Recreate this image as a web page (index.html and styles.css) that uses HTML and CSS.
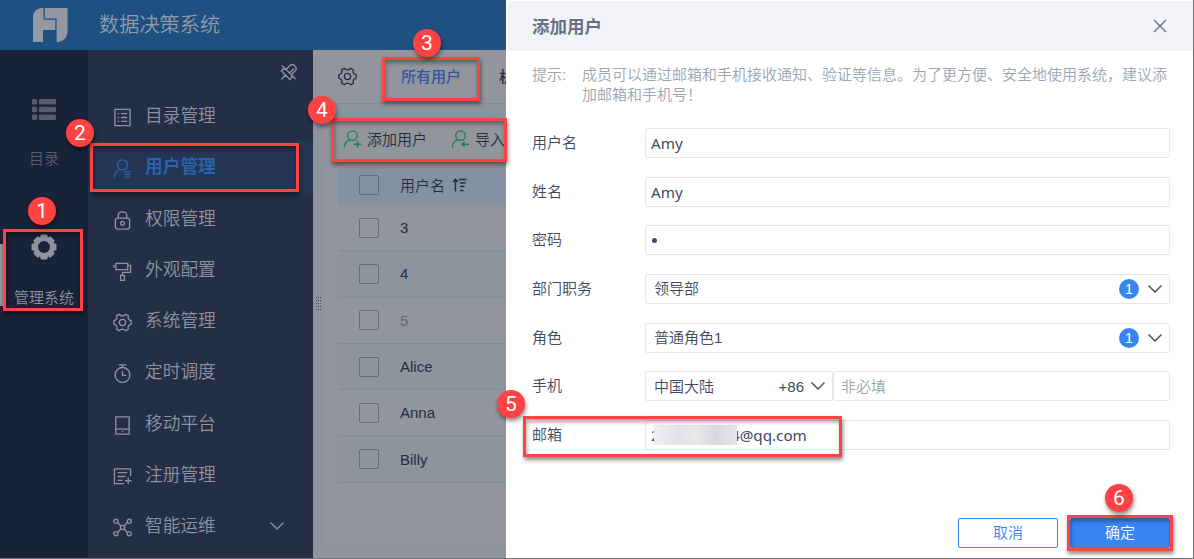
FILE: index.html
```
<!DOCTYPE html>
<html lang="zh-CN">
<head>
    <meta charset="UTF-8">
    <meta name="viewport" content="width=device-width, initial-scale=1.0">
    <title>数据决策系统</title>
    <link rel="stylesheet" href="styles.css">
</head>
<body>
    <svg class="defs" width="0" height="0">
        <symbol id="gear-line" viewBox="0 0 20 20">
            <path d="M6.600 1.300 Q10 4.800 13.400 1.300 L16.200 3 Q14.900 7.200 19 8 V12 Q14.900 12.800 16.200 17 L13.400 18.700 Q10 15.200 6.600 18.700 L3.800 17 Q5.100 12.800 1 12 V8 Q5.100 7.200 3.800 3 Z"/>
            <circle cx="10" cy="10" r="3.3"/>
        </symbol>
        <symbol id="chevron" viewBox="0 0 16 10">
            <path d="M1.5 1.5 L8 8 L14.5 1.5"/>
        </symbol>
    </svg>

    <div class="app">
        <header class="topbar">
            <svg class="logo" width="36" height="36" viewBox="0 0 36 36">
                <path d="M9 1 H11.500 V12.800 H23.300 V23 H11 V35 H1 V9 Q2 2 9 1 Z"/>
                <path d="M12.800 1 H35.500 V26 Q34 34 26 35 H24.600 V11.400 H12.800 Z"/>
            </svg>
            <span class="system-name">数据决策系统</span>
        </header>

        <div class="main">
            <nav class="rail">
                <div class="rail-item">
                    <svg width="24" height="21" viewBox="0 0 24 21">
                        <rect x="0" y="0" width="5" height="5.500" rx="1"/><rect x="7" y="0" width="17" height="5.500" rx="1"/>
                        <rect x="0" y="7.700" width="5" height="5.500" rx="1"/><rect x="7" y="7.700" width="17" height="5.500" rx="1"/>
                        <rect x="0" y="15.400" width="5" height="5.500" rx="1"/><rect x="7" y="15.400" width="17" height="5.500" rx="1"/>
                    </svg>
                    <span>目录</span>
                </div>
                <div class="rail-item current">
                    <svg width="26" height="26" viewBox="0 0 26 26">
                        <path fill-rule="evenodd" d="M10 0.500 H16 L17 3.500 L19.500 2.300 L23.700 6.500 L22.500 9 L25.500 10 V16 L22.500 17 L23.700 19.500 L19.500 23.700 L17 22.500 L16 25.500 H10 L9 22.500 L6.500 23.700 L2.300 19.500 L3.500 17 L0.500 16 V10 L3.500 9 L2.300 6.500 L6.500 2.300 L9 3.500 Z M13 7 A6 6 0 1 0 13 19 A6 6 0 1 0 13 7 Z"/>
                    </svg>
                    <span>管理系统</span>
                </div>
            </nav>

            <aside class="sidebar">
                <svg class="pin" width="18" height="18" viewBox="0 0 18 18">
                    <path d="M2 2.500 L15.500 16 M6.500 6 L10 2.500 Q12 0.500 14.500 2.500 Q17.500 5 15.500 7.500 L12 11 M10 9.500 L14 5.500 M6 6 L2.500 6.500 L1.500 8 L10 16.500 L11.500 15 L12 11.500 M5.500 12 L1.500 16.500"/>
                </svg>
                <div class="menu-item">
                    <svg class="icon" viewBox="0 0 20 20"><path d="M2 1.500 H18 V18.500 H2 Z M8.500 6 H15 M8.500 10 H15 M8.500 14 H15 M5 6 H6.500 M5 10 H6.500 M5 14 H6.500"/></svg>
                    <span>目录管理</span>
                </div>
                <div class="menu-item active">
                    <svg class="icon" viewBox="0 0 20 20"><circle cx="10" cy="6.300" r="5.300"/><path d="M1.500 19.500 Q1.500 13.500 7 11.200 M12 13.500 H18.500 M12 16.300 H18.500 M12 19 H18.500"/></svg>
                    <span>用户管理</span>
                </div>
                <div class="menu-item">
                    <svg class="icon" viewBox="0 0 20 20"><rect x="2.500" y="7.500" width="15" height="11.500" rx="2.500"/><path d="M5.500 7.500 V5 Q5.500 1 10 1 Q14.500 1 14.500 5 V7.500"/><circle cx="10" cy="13" r="2"/></svg>
                    <span>权限管理</span>
                </div>
                <div class="menu-item">
                    <svg class="icon" viewBox="0 0 20 20"><path d="M3 1.500 H15.500 V8 H3 Z M1 3 V6 M15.500 3.500 H18.500 V11 H10 V14 M8 14 H12 V19.500 H8 Z"/></svg>
                    <span>外观配置</span>
                </div>
                <div class="menu-item">
                    <svg class="icon"><use href="#gear-line"/></svg>
                    <span>系统管理</span>
                </div>
                <div class="menu-item">
                    <svg class="icon" viewBox="0 0 20 20"><circle cx="10" cy="11.500" r="7.800"/><path d="M6 1 H14 M10 1 V3.500 M10 7 V12 H14"/></svg>
                    <span>定时调度</span>
                </div>
                <div class="menu-item">
                    <svg class="icon" viewBox="0 0 20 20"><path d="M3 1 H17 V19 H3 Z M3 13.800 H17 M9.200 16.400 H10.800"/></svg>
                    <span>移动平台</span>
                </div>
                <div class="menu-item">
                    <svg class="icon" viewBox="0 0 20 20"><path d="M18.500 9.500 V2 H1.500 V17.500 H11.500 M5 6 H15 M5 10 H13 M5 14 H10 M12.500 14.500 H19.500 M16 11 V18"/></svg>
                    <span>注册管理</span>
                </div>
                <div class="menu-item">
                    <svg class="icon" viewBox="0 0 20 20"><circle cx="3" cy="3.500" r="2.200"/><circle cx="17" cy="3.500" r="2.200"/><circle cx="3" cy="16.500" r="2.200"/><circle cx="17" cy="16.500" r="2.200"/><circle cx="10" cy="10" r="2.200"/><path d="M5 5 L8.300 8.500 M15 5 L11.700 8.500 M5 15 L8.300 11.500 M15 15 L11.700 11.500"/></svg>
                    <span>智能运维</span>
                    <svg class="chevron"><use href="#chevron"/></svg>
                </div>
            </aside>

            <section class="content">
                <div class="tabs">
                    <svg class="tab-gear"><use href="#gear-line"/></svg>
                    <span class="tab selected">所有用户</span>
                    <span class="tab">机构</span>
                </div>
                <svg class="grip" width="6" height="15"><path d="M0.500 0 V15 M2.500 0 V15 M4.500 0 V15"/></svg>
                <div class="panel">
                    <div class="toolbar">
                        <svg class="tool-icon" viewBox="0 0 20 20"><circle cx="10" cy="6" r="5"/><path d="M1.500 18.500 Q1.500 12.500 7 10.500 M11.500 15 H19 M15.300 11.300 V18.800"/></svg>
                        <span>添加用户</span>
                        <svg class="tool-icon second" viewBox="0 0 20 20"><circle cx="10" cy="6" r="5"/><path d="M1.500 18.500 Q1.500 12.500 7 10.500 M11.500 15 H19 M14.500 12.300 L11.500 15 L14.500 17.700"/></svg>
                        <span>导入用户</span>
                    </div>
                    <div class="table">
                        <div class="row head"><i class="check"></i><span>用户名</span>
                            <svg class="sort" width="15" height="14" viewBox="0 0 15 14"><path d="M3.500 13.500 V1.500 M1 4 L3.500 1.200 L6 4 M7 1.500 H14.500 M8 5 H13.500 M8 8.500 H12.500 M8 12.500 H11.500"/></svg>
                        </div>
                        <div class="row"><i class="check"></i><span>3</span></div>
                        <div class="row even"><i class="check"></i><span>4</span></div>
                        <div class="row disabled"><i class="check"></i><span>5</span></div>
                        <div class="row even"><i class="check"></i><span>Alice</span></div>
                        <div class="row"><i class="check"></i><span>Anna</span></div>
                        <div class="row even"><i class="check"></i><span>Billy</span></div>
                    </div>
                </div>
            </section>
        </div>
    </div>

    <div class="drawer">
        <div class="drawer-header">
            <h2>添加用户</h2>
            <svg width="14" height="14" viewBox="0 0 14 14"><path d="M1 1 L13 13 M13 1 L1 13"/></svg>
        </div>
        <div class="hint">
            <span>提示:</span>
            <p>成员可以通过邮箱和手机接收通知、验证等信息。为了更方便、安全地使用系统，建议添加邮箱和手机号！</p>
        </div>
        <div class="form">
            <div class="form-group"><label>用户名</label><div class="input latin">Amy</div></div>
            <div class="form-group"><label>姓名</label><div class="input latin">Amy</div></div>
            <div class="form-group"><label>密码</label><div class="input"><i class="dot"></i></div></div>
            <div class="form-group">
                <label>部门职务</label>
                <div class="input select"><span>领导部</span><b class="count">1</b><svg class="chevron"><use href="#chevron"/></svg></div>
            </div>
            <div class="form-group">
                <label>角色</label>
                <div class="input select"><span>普通角色1</span><b class="count">1</b><svg class="chevron"><use href="#chevron"/></svg></div>
            </div>
            <div class="form-group">
                <label>手机</label>
                <div class="input select region"><span>中国大陆</span><em>+86</em><svg class="chevron"><use href="#chevron"/></svg></div>
                <div class="input phone">非必填</div>
            </div>
            <div class="form-group">
                <label>邮箱</label>
                <div class="input latin email"><span class="first">2</span><span>4@qq.com</span><i class="mask"></i></div>
            </div>
        </div>
        <div class="actions">
            <button class="cancel">取消</button>
            <button class="ok">确定</button>
        </div>
    </div>

    <!-- step markers over the page -->
    <div class="mark mark-1"></div>
    <div class="mark mark-2"></div>
    <div class="mark mark-3"></div>
    <div class="mark mark-4"></div>
    <div class="mark mark-5"></div>
    <div class="mark mark-6"></div>
    <div class="step step-1">1</div>
    <div class="step step-2">2</div>
    <div class="step step-3">3</div>
    <div class="step step-4">4</div>
    <div class="step step-5">5</div>
    <div class="step step-6">6</div>
</body>
</html>
```
FILE: styles.css
```
* {
    box-sizing: border-box;
}
body {
    margin: 0;
    width: 1194px;
    height: 559px;
    position: relative;
    overflow: hidden;
    background-color: #707276;
    font-family: "Liberation Sans", "Noto Sans CJK SC", sans-serif;
    font-size: 15px;
    font-weight: 350;
    color: #242e42;
}
svg {
    fill: none;
    stroke: currentColor;
    stroke-width: 1.4;
    flex: none;
}
.defs {
    position: absolute;
}
.app {
    width: 1193px;
    height: 558px;
    display: flex;
    flex-direction: column;
}
.topbar {
    height: 50px;
    flex: none;
    display: flex;
    align-items: center;
    padding-left: 32px;
    background-color: #1e5081;
    color: #929ba8;
}
.logo {
    fill: #9398a2;
    stroke: none;
}
.system-name {
    margin-left: 31px;
    padding-bottom: 3px;
    font-size: 20.200px;
}
.main {
    flex: 1;
    display: flex;
    min-height: 0;
}

/* left rail */
.rail {
    width: 88px;
    background-color: #182239;
    padding-top: 49px;
}
.rail-item {
    height: 137px;
    display: flex;
    flex-direction: column;
    align-items: center;
    color: #555d6d;
}
.rail-item svg {
    fill: currentColor;
    stroke: none;
}
.rail-item span {
    margin-top: 28px;
    line-height: 22px;
}
.rail-item.current {
    color: #8e939d;
    height: 70px;
    margin-top: -2px;
    position: relative;
}
.rail-item.current span {
    margin-top: 27px;
}
.rail-item.current::before {
    content: "";
    position: absolute;
    left: 0;
    top: 10px;
    width: 4px;
    height: 62px;
    background-color: #92959c;
}

/* sidebar menu */
.sidebar {
    width: 225px;
    background-color: #242f47;
    color: #8d939e;
    display: flex;
    flex-direction: column;
}
.pin {
    margin: 13px 15px 9px auto;
}
.menu-item {
    height: 51.250px;
    flex: none;
    display: flex;
    align-items: center;
    padding: 0 28px 0 25px;
    font-size: 17.700px;
}
.menu-item span {
    padding-bottom: 3px;
}
.menu-item .icon {
    width: 19px;
    height: 19px;
    margin-right: 13px;
    position: relative;
    top: 2px;
}
.menu-item.active {
    background-color: #243654;
    color: #2a62ab;
    font-weight: bold;
}
.chevron {
    width: 16px;
    height: 10px;
    margin-left: auto;
}

/* user list */
.content {
    flex: 1;
    position: relative;
    background-color: #8d949e;
}
.tabs {
    height: 54px;
    display: flex;
    align-items: center;
    padding-left: 25px;
    background-color: #92959c;
    border-bottom: 1px solid #858b96;
}
.tab-gear {
    width: 19px;
    height: 19px;
    margin-right: 44px;
}
.tab {
    margin-right: 38px;
    padding-bottom: 2px;
    white-space: nowrap;
    font-weight: 500;
}
.tab.selected {
    color: #2f56a0;
}
.grip {
    position: absolute;
    left: 3px;
    top: 247px;
    stroke: #3f4858;
    stroke-width: 1;
    stroke-dasharray: 1 2;
}
.panel {
    height: 429px;
    margin: 14px 0 0 12px;
    padding-left: 13px;
    background-color: #92959c;
}
.toolbar {
    height: 49px;
    display: flex;
    align-items: center;
    padding: 0 0 6px 5px;
    white-space: nowrap;
}
.toolbar span, .row.head span {
    padding-bottom: 2px;
}
.tool-icon {
    width: 19px;
    height: 19px;
    margin-right: 5px;
    color: #1d7c53;
}
.tool-icon.second {
    margin-left: 24px;
}
.row {
    height: 46.300px;
    display: flex;
    align-items: center;
    padding-left: 21px;
    border-bottom: 1px solid #7f8ba1;
}
.row.head {
    height: 38px;
    padding-bottom: 2px;
    border: none;
    background-color: #8491a2;
}
.row.even {
    background-color: #8d949d;
}
.row.disabled span {
    color: #626872;
}
.check {
    width: 20px;
    height: 20px;
    margin-right: 21px;
    border: 1px solid #646b7a;
    border-radius: 2px;
}
.sort {
    margin-left: 7px;
}

/* drawer */
.drawer {
    position: absolute;
    left: 506px;
    top: 0;
    width: 687px;
    height: 558px;
    padding: 1px 0 0 2px;
    background-color: #fff;
    color: #3d4a61;
}
.drawer-header {
    height: 50px;
    display: flex;
    align-items: center;
    justify-content: space-between;
    padding: 0 26px 0 24px;
    background-color: #f1f3f7;
    color: #667084;
}
.drawer-header h2 {
    margin: 0;
    padding-bottom: 2px;
    font-size: 17.500px;
}
.hint {
    display: flex;
    margin: 14px 22px 0 24px;
    line-height: 20px;
    color: #9da5b3;
}
.hint span {
    width: 50px;
    flex: none;
}
.hint p {
    margin: 0;
    width: 588px;
}
.form {
    margin: 23px 23px 0 24px;
    display: flex;
    flex-direction: column;
    gap: 18.670px;
}
.form-group {
    height: 30px;
    display: flex;
    align-items: center;
}
.form-group label {
    width: 113px;
    padding-bottom: 3px;
    flex: none;
}
.input {
    flex: 1;
    height: 30px;
    display: flex;
    align-items: center;
    padding: 0 5px;
    border: 1px solid #e6e8ec;
    border-radius: 2px;
}
.latin {
    font-family: "Noto Sans", "Noto Sans CJK SC", sans-serif;
    font-size: 15.200px;
    font-weight: 400;
}
.dot {
    width: 5px;
    height: 5px;
    margin: 1px 0 0 1px;
    border-radius: 50%;
    background-color: #3d4a61;
}
.select {
    padding: 0 6px 0 8px;
}
.select span, .phone {
    padding-bottom: 2px;
}
.count {
    width: 20px;
    height: 20px;
    margin-left: auto;
    margin-right: 8px;
    border-radius: 50%;
    background-color: #3685f2;
    color: #fff;
    font-weight: normal;
    line-height: 20px;
    text-align: center;
}
.select .count + .chevron {
    margin-left: 0;
}
.region {
    flex: none;
    width: 188px;
}
.region em {
    margin-left: auto;
    font-style: normal;
}
.region .chevron {
    margin-left: 6px;
}
.phone {
    padding-left: 7px;
    color: #9da5b3;
}
.email {
    position: relative;
}
.email .first {
    width: 80px;
}
/* hides the private part of the address */
.mask {
    position: absolute;
    left: 8px;
    top: 4px;
    width: 83px;
    height: 20px;
    background: linear-gradient(90deg, #f0f0f3, #e3e3e7 30%, #e9e9ec 50%, #d9d9dd 75%, #e6e6ea);
}
.actions {
    display: flex;
    justify-content: flex-end;
    gap: 12px;
    margin: 68px 23px 0 0;
}
button {
    width: 100px;
    height: 30px;
    padding: 0 0 2px;
    border: 1px solid #3685f2;
    border-radius: 2px;
    background-color: #fff;
    color: #3685f2;
    font: inherit;
}
.ok {
    background-color: #3685f2;
    color: #fff;
}

/* red frames and numbered circles */
.mark {
    position: absolute;
    border: 3px solid #ff4242;
    box-shadow: 1px 3px 4px rgba(0, 0, 0, 0.45), inset 1px 3px 4px rgba(0, 0, 0, 0.35);
}
.mark-1 { left: 3px; top: 229px; width: 80px; height: 82px; }
.mark-2 { left: 90px; top: 143px; width: 209px; height: 49px; }
.mark-3 { left: 382px; top: 57px; width: 98px; height: 44px; }
.mark-4 { left: 331px; top: 118px; width: 176px; height: 44px; }
.mark-5 { left: 523px; top: 416px; width: 319px; height: 41px; }
.mark-6 { left: 1067px; top: 515px; width: 106px; height: 36px; }
.step {
    position: absolute;
    width: 28px;
    height: 28px;
    border-radius: 50%;
    background-color: #ff4242;
    box-shadow: 1px 3px 4px rgba(0, 0, 0, 0.45);
    color: #fff;
    font-family: Roboto, sans-serif;
    font-size: 21px;
    font-weight: 400;
    line-height: 28px;
    text-align: center;
}
.step-1 { left: 28px; top: 197px; }
.step-2 { left: 66px; top: 119px; }
.step-3 { left: 413px; top: 29px; }
.step-4 { left: 308px; top: 96px; }
.step-5 { left: 497px; top: 390px; }
.step-6 { left: 1105px; top: 484px; }
```
